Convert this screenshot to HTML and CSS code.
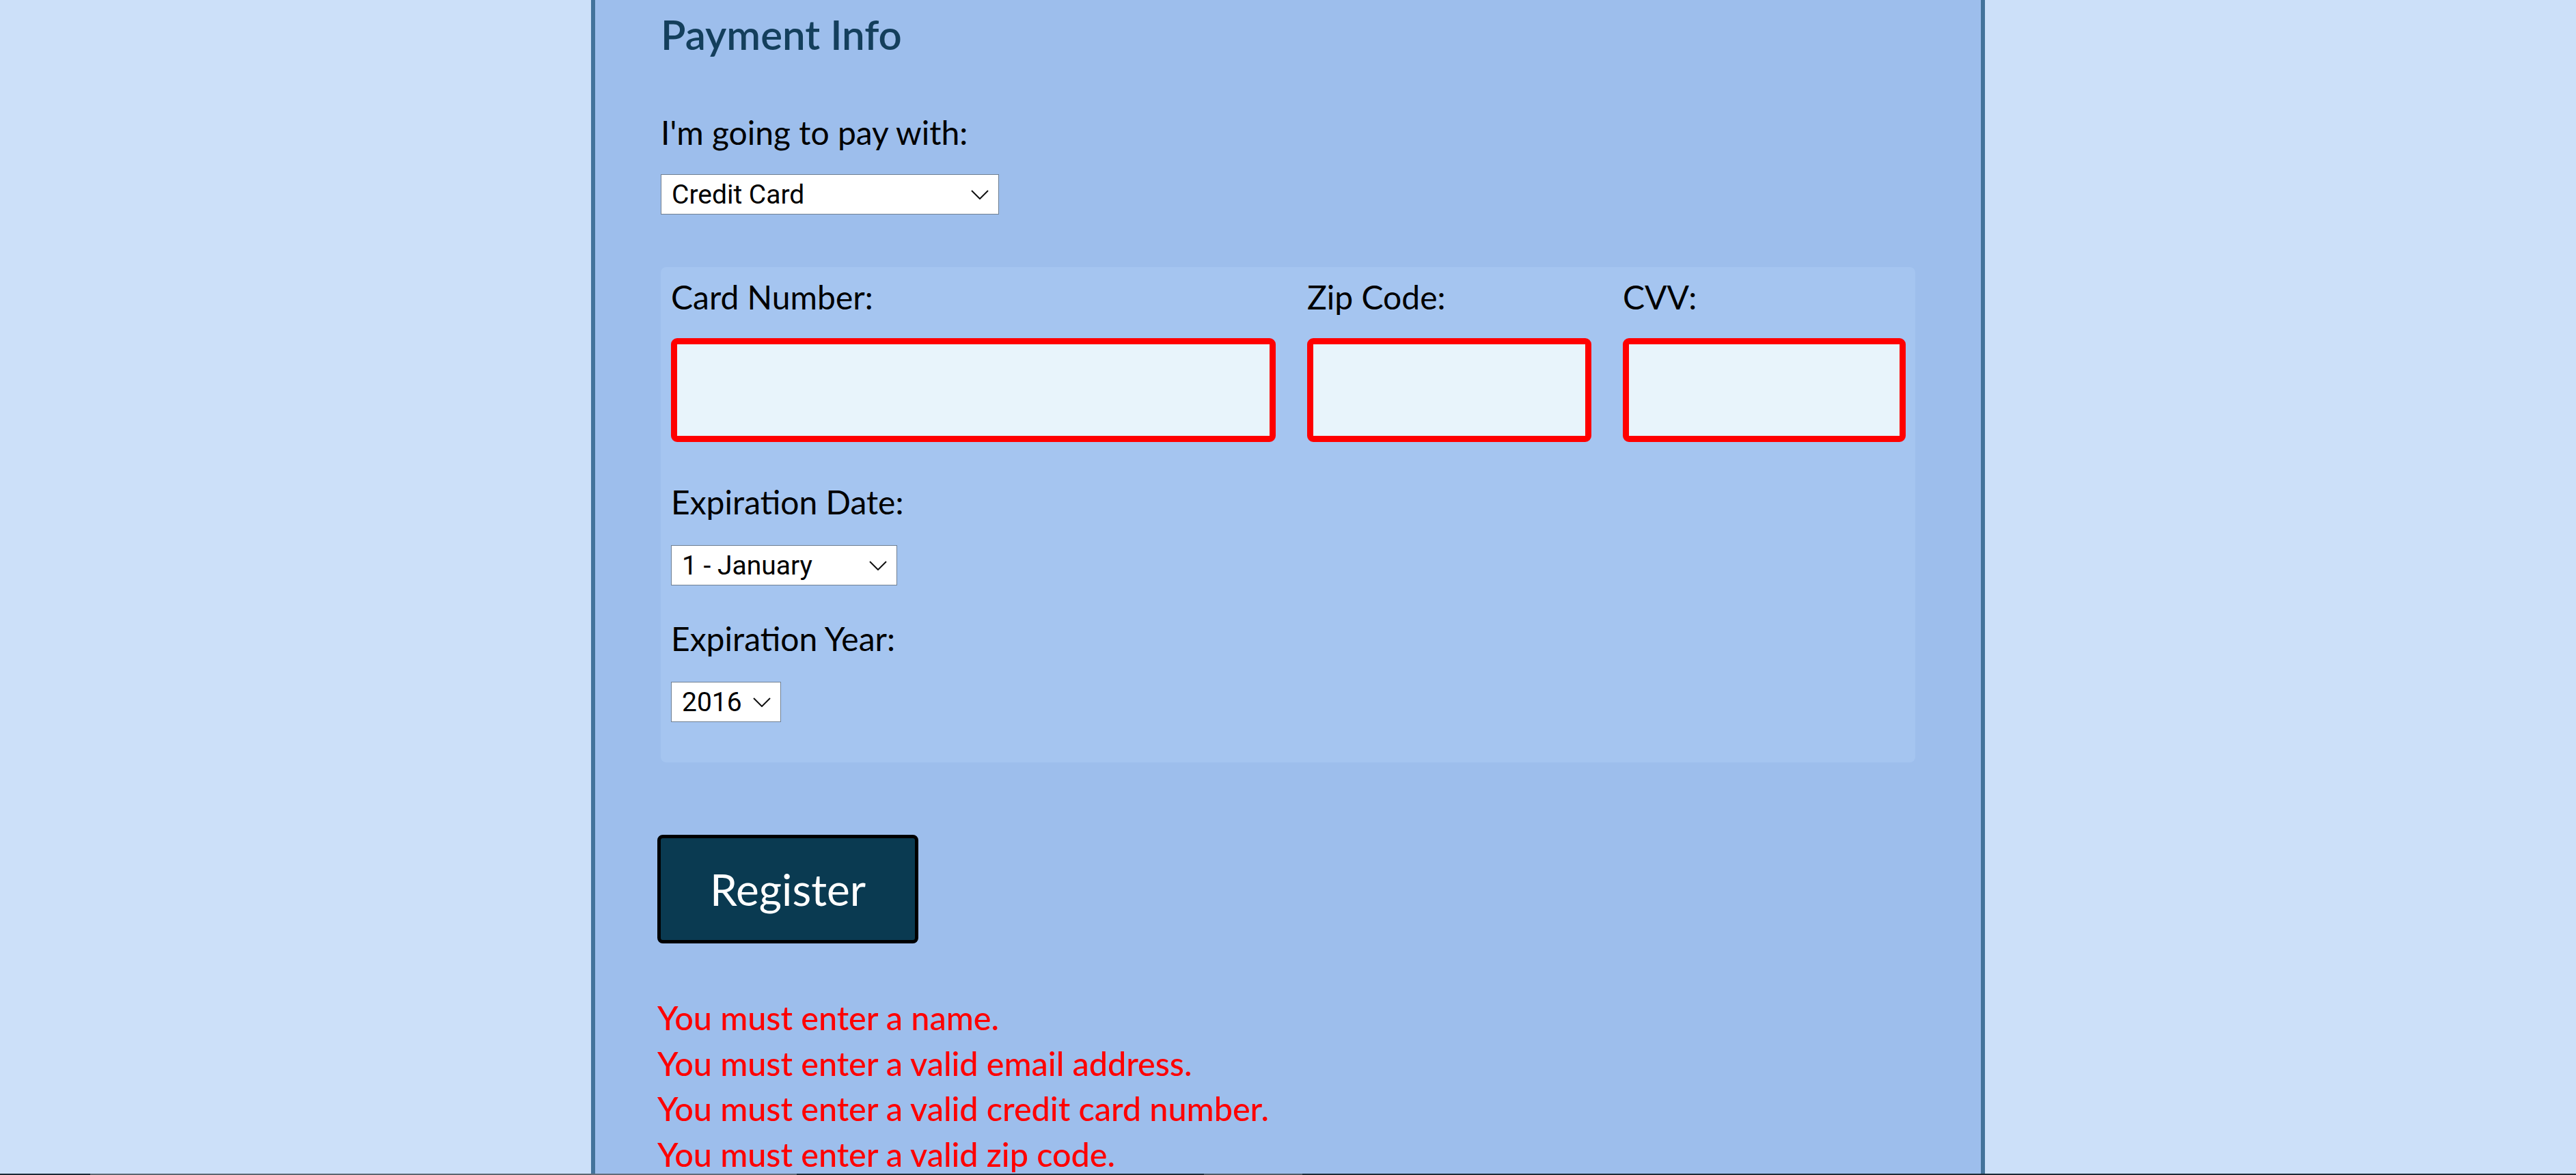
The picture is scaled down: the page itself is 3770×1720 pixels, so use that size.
FILE: index.html
```html
<!DOCTYPE html>
<html lang="en">
<head>
<meta charset="utf-8">
<title>Payment Info</title>
<link rel="stylesheet" href="styles.css">
</head>
<body>
<main class="page">
  <h2 class="heading">Payment Info</h2>
  <label class="label pay-label" for="payment">I'm going to pay with:</label>
  <div class="select select-pay">
    <select id="payment"><option>Credit Card</option><option>PayPal</option><option>Bitcoin</option></select>
    <svg class="chev" viewBox="0 0 26 14" width="26" height="14"><path d="M1 1 L13 13 L25 1" fill="none" stroke="#111" stroke-width="2"/></svg>
  </div>

  <section class="panel">
    <div class="card-row">
      <div class="field">
        <label class="label" for="cc">Card Number:</label>
        <input class="input" id="cc" type="text">
      </div>
      <div class="field">
        <label class="label" for="zip">Zip Code:</label>
        <input class="input" id="zip" type="text">
      </div>
      <div class="field">
        <label class="label" for="cvv">CVV:</label>
        <input class="input" id="cvv" type="text">
      </div>
    </div>
    <label class="label exp-label" for="month">Expiration Date:</label>
    <div class="select select-month">
      <select id="month"><option>1 - January</option></select>
      <svg class="chev" viewBox="0 0 26 14" width="26" height="14"><path d="M1 1 L13 13 L25 1" fill="none" stroke="#111" stroke-width="2"/></svg>
    </div>
    <label class="label year-label" for="year">Expiration Year:</label>
    <div class="select select-year">
      <select id="year"><option>2016</option></select>
      <svg class="chev" viewBox="0 0 26 14" width="26" height="14"><path d="M1 1 L13 13 L25 1" fill="none" stroke="#111" stroke-width="2"/></svg>
    </div>
  </section>

  <div class="actions">
    <button class="register" type="submit">Register</button>
    <ul class="errors">
      <li>You must enter a name.</li>
      <li>You must enter a valid email address.</li>
      <li>You must enter a valid credit card number.</li>
      <li>You must enter a valid zip code.</li>
    </ul>
  </div>
</main>
<footer class="footer"></footer>
</body>
</html>
```

FILE: styles.css
```css
html, body {
  margin: 0;
  padding: 0;
}

body {
  background: #cce0f9;
  font-family: Lato, "Noto Sans", sans-serif;
  color: #000;
  overflow: hidden;
}

.page {
  box-sizing: border-box;
  width: 2040px;
  height: 1718px;
  overflow: hidden;
  margin: 0 auto;
  padding: 20px 96px 0;
  background: #9dbeec;
  border-left: 6px solid #43739b;
  border-right: 6px solid #43739b;
  display: flex;
  flex-direction: column;
  align-items: flex-start;
}

.page > * {
  flex-shrink: 0;
}

.heading {
  margin: 0;
  font-size: 60px;
  line-height: 60px;
  font-weight: 600;
  color: #143f5c;
}

.label {
  display: block;
  font-size: 48px;
  line-height: 55px;
  font-weight: 400;
  color: #000;
}

.pay-label {
  margin-top: 86px;
}

.select {
  position: relative;
  height: 59px;
}

.select select {
  appearance: none;
  -webkit-appearance: none;
  box-sizing: border-box;
  width: 100%;
  height: 100%;
  margin: 0;
  padding: 0 0 0 15px;
  border: 1.5px solid #6f7f92;
  border-radius: 0;
  background: #fff;
  font-family: Roboto, "Liberation Sans", sans-serif;
  font-size: 39px;
  color: #000;
}

.chev {
  position: absolute;
  right: 15px;
  top: 23px;
  pointer-events: none;
}

.select-pay {
  width: 495px;
  margin-top: 34px;
}

.panel {
  box-sizing: border-box;
  align-self: stretch;
  margin-top: 77px;
  padding: 16px 16px 59px 15px;
  background: #a5c5f0;
  border-radius: 8px;
}

.card-row {
  display: grid;
  grid-template-columns: 885px 416px 414px;
  column-gap: 46px;
}

.field .label {
  margin-bottom: 33px;
}

.input {
  display: block;
  box-sizing: border-box;
  width: 100%;
  height: 152px;
  margin: 0;
  border: 9px solid #ff0000;
  border-radius: 9px;
  background: #e8f4fb;
  font-size: 40px;
}

.exp-label {
  margin-top: 60px;
}

.select-month {
  width: 331px;
  margin-top: 36px;
}

.year-label {
  margin-top: 50px;
}

.select-year {
  width: 161px;
  margin-top: 36px;
}

.actions {
  margin-left: -5px;
  margin-top: 106px;
}

.register {
  box-sizing: border-box;
  width: 382px;
  height: 159px;
  padding: 0;
  background: #0a3a51;
  border: 5px solid #000;
  border-radius: 8px;
  color: #fff;
  font-family: Lato, "Noto Sans", sans-serif;
  font-size: 64px;
  font-weight: 400;
}

.errors {
  list-style: none;
  margin: 75px 0 0;
  padding: 0;
  color: #ff0000;
  font-size: 48.5px;
  line-height: 66.5px;
  font-weight: 500;
}

.footer {
  height: 2px;
  background: linear-gradient(to right,
    #1b2a35 0, #1b2a35 132px,
    #5b6670 132px, #5b6670 865px,
    #606b79 865px, #606b79 1166px,
    #1b2a35 1166px, #1b2a35 1762px,
    #4e5b66 1762px, #4e5b66 1906px,
    #1b2a35 1906px);
}
```
